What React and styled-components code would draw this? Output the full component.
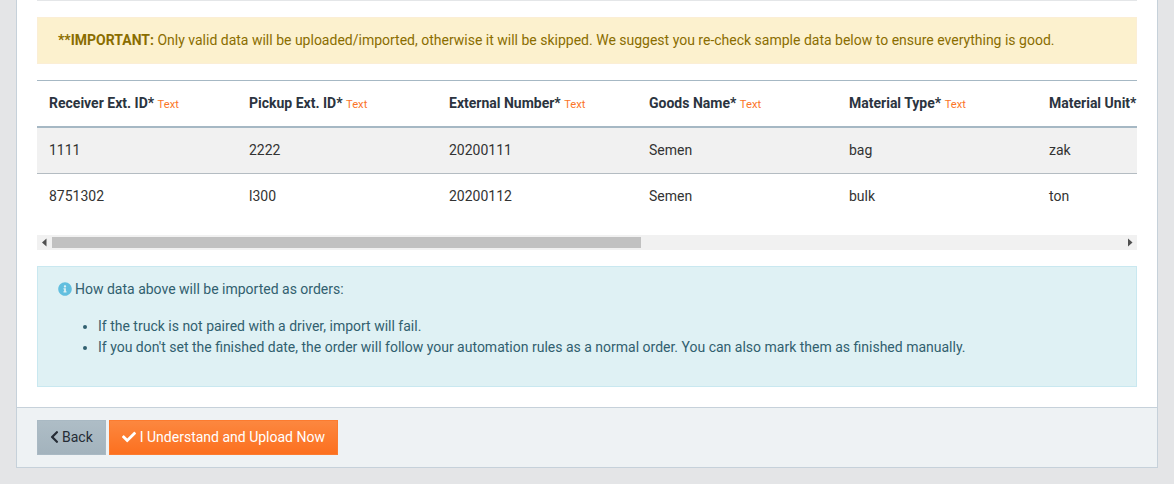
import styled, { createGlobalStyle } from "styled-components";
import { FaCheck, FaChevronLeft, FaInfoCircle } from "react-icons/fa";

const GlobalStyle = createGlobalStyle`
  html, body {
    margin: 0;
    background: #e4e5e7;
  }
  body {
    font-family: Roboto, "Liberation Sans", sans-serif;
    font-size: 14px;
    line-height: 20px;
    color: #333;
    overflow: hidden;
  }
`;

const Page = styled.div`
  padding: 0 16px 16px;
`;

const Panel = styled.div`
  background: #fff;
  border: 1px solid #c6d1da;
  border-top: 0;
`;

const Body = styled.div`
  padding: 0 20px 20px;
`;

const Rule = styled.div`
  height: 1px;
  background: #e4e6e8;
  margin-bottom: 16px;
`;

const Alert = styled.div`
  background: #fcf1ce;
  border: 1px solid #fbeed5;
  color: #8a6d00;
  padding: 12px 20px;
  height: 47px;
  box-sizing: border-box;
  margin-bottom: 16px;
  strong {
    font-weight: 700;
  }
`;

const TableWrap = styled.div`
  overflow: hidden;
  border-top: 1px solid #a6b8c4;
`;

const Table = styled.table`
  border-collapse: collapse;
  table-layout: fixed;
  width: 2000px;
`;

const HeadCell = styled.th`
  width: 200px;
  box-sizing: border-box;
  height: 46px;
  padding: 0 12px;
  text-align: left;
  font-weight: 700;
  color: #2b3440;
  white-space: nowrap;
  border-bottom: 2px solid #a6b8c4;
`;

const TypeTag = styled.small`
  font-size: 11.2px;
  font-weight: 400;
  color: #fb7528;
`;

const Row = styled.tr`
  background: ${(p) => (p.$striped ? "#f1f1f1" : "#fff")};
`;

const Cell = styled.td`
  height: 46px;
  box-sizing: border-box;
  padding: 0 12px;
  color: #333;
  border-top: ${(p) => (p.$first ? "0" : "1px solid #b4bcc2")};
`;

const ScrollBar = styled.div`
  display: flex;
  align-items: center;
  justify-content: space-between;
  height: 15px;
  margin-top: 16px;
  background: #f1f1f1;
`;

const ScrollArrow = styled.svg`
  width: 15px;
  height: 15px;
  flex: none;
  fill: #505050;
`;

const ScrollTrack = styled.div`
  flex: 1;
  height: 11px;
`;

const ScrollThumb = styled.div`
  width: 55%;
  height: 100%;
  background: #c1c1c1;
`;

const Info = styled.div`
  margin-top: 16px;
  height: 121px;
  box-sizing: border-box;
  padding: 12px 20px;
  background: #dff1f4;
  border: 1px solid #c9e8f0;
  color: #31606f;
`;

const InfoTitle = styled.div`
  display: flex;
  align-items: center;
  gap: 3px;
  svg {
    color: #62bfdf;
    font-size: 14px;
  }
`;

const InfoList = styled.ul`
  margin: 17px 0 0;
  padding-left: 40px;
  line-height: 21px;
`;

const Footer = styled.div`
  display: flex;
  gap: 3px;
  padding: 12px 20px;
  background: #eef2f4;
  border-top: 1px solid #c6d1da;
`;

const Button = styled.button`
  display: flex;
  align-items: center;
  gap: ${(p) => p.$gap || 4}px;
  height: 35px;
  padding: 0 12px 2px;
  font: inherit;
  border: 1px solid transparent;
  border-radius: 0;
`;

const BackButton = styled(Button)`
  background: linear-gradient(#aebdc6, #a3b3bd);
  border-color: #a9b9c3;
  color: #252c35;
  svg {
    width: 9px;
    height: 14px;
    margin-top: 1px;
  }
`;

const UploadButton = styled(Button)`
  background: linear-gradient(#fc873f, #fc701f);
  border-color: #fc7b2f;
  color: #fff;
  svg {
    font-size: 14px;
    margin-top: 1px;
  }
`;

const columns = [
  "Receiver Ext. ID*",
  "Pickup Ext. ID*",
  "External Number*",
  "Goods Name*",
  "Material Type*",
  "Material Unit*",
];

const rows = [
  ["1111", "2222", "20200111", "Semen", "bag", "zak"],
  ["8751302", "l300", "20200112", "Semen", "bulk", "ton"],
];

const App = () => {
  return (
    <Page>
      <GlobalStyle />
      <Panel>
        <Body>
          <Rule />
          <Alert>
            <strong>**IMPORTANT:</strong> Only valid data will be
            uploaded/imported, otherwise it will be skipped. We suggest you
            re-check sample data below to ensure everything is good.
          </Alert>
          <TableWrap>
            <Table>
              <thead>
                <tr>
                  {columns.map((name) => (
                    <HeadCell key={name}>
                      {name} <TypeTag>Text</TypeTag>
                    </HeadCell>
                  ))}
                  <HeadCell />
                  <HeadCell />
                  <HeadCell />
                  <HeadCell />
                </tr>
              </thead>
              <tbody>
                {rows.map((row, i) => (
                  <Row key={row[0]} $striped={i === 0}>
                    {row.map((value, j) => (
                      <Cell key={j} $first={i === 0}>
                        {value}
                      </Cell>
                    ))}
                    <Cell colSpan={4} $first={i === 0} />
                  </Row>
                ))}
              </tbody>
            </Table>
          </TableWrap>
          <ScrollBar>
            <ScrollArrow viewBox="0 0 15 15">
              <path d="M9.5 3.5v8L5 7.5z" />
            </ScrollArrow>
            <ScrollTrack>
              <ScrollThumb />
            </ScrollTrack>
            <ScrollArrow viewBox="0 0 15 15">
              <path d="M6 3.5v8l4.5-4z" />
            </ScrollArrow>
          </ScrollBar>
          <Info>
            <InfoTitle>
              <FaInfoCircle />
              How data above will be imported as orders:
            </InfoTitle>
            <InfoList>
              <li>If the truck is not paired with a driver, import will fail.</li>
              <li>
                If you don't set the finished date, the order will follow your
                automation rules as a normal order. You can also mark them as
                finished manually.
              </li>
            </InfoList>
          </Info>
        </Body>
        <Footer>
          <BackButton $gap={3}>
            <FaChevronLeft />
            Back
          </BackButton>
          <UploadButton>
            <FaCheck />I Understand and Upload Now
          </UploadButton>
        </Footer>
      </Panel>
    </Page>
  );
};

export default App;
